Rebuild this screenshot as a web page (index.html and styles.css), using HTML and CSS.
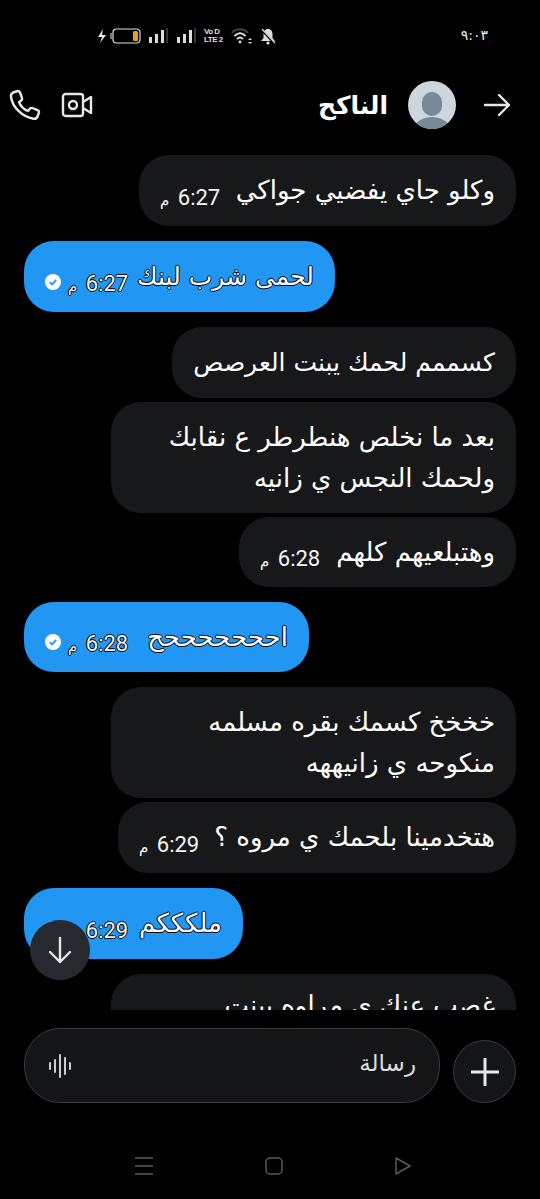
FILE: index.html
```html
<!DOCTYPE html>
<html lang="ar">

	<head>
		<meta charset="UTF-8">
		<title>الناكح</title>
		<link rel="stylesheet" href="styles.css">
	</head>

	<body>
		<div class="phone">
			<!-- status bar -->
			<div class="status">
				<div class="status_icons">
					<svg class="bolt" width="12" height="16" viewBox="0 0 12 16"><path d="M7 1 L2 9 H6 L4 15 L10 7 H6 Z" fill="#e8e8e8"/></svg>
					<svg width="31" height="16" viewBox="0 0 31 16"><rect x="0" y="5" width="2" height="6" fill="#777"/><rect x="3" y="1" width="27" height="14" rx="3.5" fill="none" stroke="#ddd" stroke-width="1.2"/><rect x="23" y="3" width="5" height="10" rx="1.5" fill="#e3a11c"/></svg>
					<svg width="21" height="16" viewBox="0 0 21 16"><rect x="1" y="9" width="3" height="6" fill="#ddd"/><rect x="7" y="6" width="3" height="9" fill="#ddd"/><rect x="13" y="2" width="3" height="13" fill="#ddd"/><rect x="18" y="0" width="2" height="15" fill="#333"/></svg>
					<svg width="21" height="16" viewBox="0 0 21 16"><rect x="1" y="9" width="3" height="6" fill="#ddd"/><rect x="7" y="6" width="3" height="9" fill="#ddd"/><rect x="13" y="2" width="3" height="13" fill="#ddd"/><rect x="18" y="0" width="2" height="15" fill="#333"/></svg>
					<div class="volte"><span>Vo D</span><span>LTE 2</span></div>
					<svg width="22" height="18" viewBox="0 0 22 18" fill="none" stroke="#ddd" stroke-width="1.8"><path d="M1 6 C5 1 13 1 17 6" stroke="#444"/><path d="M3.5 9 C7 5.5 11 5.5 14.5 9"/><path d="M6 12 C8 10 10 10 12 12"/><circle cx="9" cy="15" r="1.4" fill="#ddd" stroke="none"/><path d="M19 11 l-2 2 h4 z M19 17 l-2 -2 h4 z" fill="#ddd" stroke="none"/></svg>
					<svg width="16" height="17" viewBox="0 0 16 17"><path d="M8 1 C5 1 3.5 3.500 3.500 6 V10 L1 13 H15 L12.500 10 V6 C12.500 3.500 11 1 8 1 Z" fill="#ddd"/><circle cx="8" cy="15" r="1.600" fill="#ddd"/><path d="M1 1 L15 16" stroke="#000" stroke-width="2.500"/><path d="M2 1 L15 15" stroke="#ddd" stroke-width="1.200"/></svg>
				</div>
				<div class="status_time">٩:٠٣</div>
			</div>

			<!-- header -->
			<div class="head">
				<div class="head_actions">
					<svg width="32" height="32" viewBox="0 0 32 32" fill="none" stroke="#e8e8e8" stroke-width="2.400" stroke-linejoin="round"><path d="M4 3.500 L9 2 C10 2 10.500 2.500 11 3.500 L13 9 C13.300 10 13 10.800 12.300 11.400 L10 13.300 C11.500 17 15 20.500 19 22 L21 19.600 C21.700 18.900 22.500 18.700 23.500 19 L29 21.300 C30 21.800 30.300 22.500 30 23.500 L28.500 27.500 C28 29 26.500 30 24.500 29.700 C13 28 3.500 18 2 8 C1.800 6 2.500 4.300 4 3.500 Z"/></svg>
					<svg width="32" height="26" viewBox="0 0 32 26" fill="none" stroke="#e8e8e8" stroke-width="2.400" stroke-linejoin="round"><rect x="2" y="2" width="20" height="22" rx="2.500"/><circle cx="12" cy="13" r="4"/><path d="M22 10 L30 5 V21 L22 16"/></svg>
				</div>
				<div class="head_user">
					<div class="head_name">الناكح</div>
					<svg class="avatar" width="48" height="48" viewBox="0 0 48 48"><defs><clipPath id="av"><circle cx="24" cy="24" r="24"/></clipPath></defs><circle cx="24" cy="24" r="24" fill="#ccd6dd"/><g clip-path="url(#av)" fill="#778899"><rect x="14" y="11" width="20" height="24" rx="10"/><ellipse cx="24" cy="49" rx="18" ry="13"/></g></svg>
					<svg width="28" height="24" viewBox="0 0 28 24" fill="none" stroke="#e8e8e8" stroke-width="2.400" stroke-linecap="round" stroke-linejoin="round"><path d="M2 12 H26 M16 2 L26 12 L16 22"/></svg>
				</div>
			</div>

			<!-- messages -->
			<div class="chat">
				<div class="msg msg_in w_377"><span class="msg_text">وكلو جاي يفضيي جواكي</span><span class="msg_time">6:27 <small>م</small></span></div>
				<div class="msg msg_out w_311"><span class="msg_text msg_small">لحمى شرب لبنك</span><span class="msg_time">6:27 <small>م</small></span><svg class="tick" width="16" height="16" viewBox="0 0 16 16"><circle cx="8" cy="8" r="8" fill="#fff"/><path d="M4.800 8.200 L7 10.400 L11.200 5.800" fill="none" stroke="#2196f3" stroke-width="1.800"/></svg></div>
				<div class="msg msg_in msg_tight w_344"><span class="msg_text msg_small">كسممم لحمك يبنت العرصص</span></div>
				<div class="msg msg_in msg_tight w_405"><span class="msg_text">بعد ما نخلص هنطرطر ع نقابك<br>ولحمك النجس ي زانيه</span></div>
				<div class="msg msg_in msg_70 w_277"><span class="msg_text">وهتبلعيهم كلهم</span><span class="msg_time">6:28 <small>م</small></span></div>
				<div class="msg msg_out msg_70 w_285"><span class="msg_text">احححححححح</span><span class="msg_time">6:28 <small>م</small></span><svg class="tick" width="16" height="16" viewBox="0 0 16 16"><circle cx="8" cy="8" r="8" fill="#fff"/><path d="M4.800 8.200 L7 10.400 L11.200 5.800" fill="none" stroke="#2196f3" stroke-width="1.800"/></svg></div>
				<div class="msg msg_in msg_tight w_405"><span class="msg_text">خخخخ كسمك بقره مسلمه<br>منكوحه ي زانيههه</span></div>
				<div class="msg msg_in w_398"><span class="msg_text">هتخدمينا بلحمك ي مروه ؟</span><span class="msg_time">6:29 <small>م</small></span></div>
				<div class="msg msg_out w_219"><span class="msg_text">ملكككم</span><span class="msg_time">6:29 <small>م</small></span><svg class="tick" width="16" height="16" viewBox="0 0 16 16"><circle cx="8" cy="8" r="8" fill="#fff"/><path d="M4.800 8.200 L7 10.400 L11.200 5.800" fill="none" stroke="#2196f3" stroke-width="1.800"/></svg></div>
				<div class="msg msg_in w_405 msg_last"><span class="msg_text">غصب عنك ي مراوه يبنت</span></div>
			</div>

			<div class="scroll_btn">
				<svg width="24" height="28" viewBox="0 0 24 28" fill="none" stroke="#e6e6e6" stroke-width="2.400" stroke-linecap="round" stroke-linejoin="round"><path d="M12 2 V26 M2 16 L12 26 L22 16"/></svg>
			</div>

			<!-- composer -->
			<div class="composer">
				<div class="plus">
					<svg width="30" height="30" viewBox="0 0 30 30" stroke="#e8e8e8" stroke-width="3"><path d="M15 1 V29 M1 15 H29"/></svg>
				</div>
				<div class="input">
					<svg width="24" height="24" viewBox="0 0 24 24" stroke="#ccc" stroke-width="2" stroke-linecap="round"><path d="M2 9 V15 M7 6 V18 M12 1 V23 M17 4 V20 M22 9 V15"/></svg>
					<span class="input_text">رسالة</span>
				</div>
			</div>

			<!-- nav -->
			<div class="nav">
				<svg width="20" height="20" viewBox="0 0 20 20" stroke="#5a5a5a" stroke-width="1.500"><path d="M1 2 H19 M1 10 H19 M1 18 H19"/></svg>
				<svg width="18" height="18" viewBox="0 0 18 18" fill="none" stroke="#5a5a5a" stroke-width="1.500"><rect x="1" y="1" width="16" height="16" rx="4"/></svg>
				<svg width="18" height="20" viewBox="0 0 18 20" fill="none" stroke="#5a5a5a" stroke-width="1.500" stroke-linejoin="round"><path d="M2 2 L16 10 L2 18 Z"/></svg>
			</div>
		</div>
	</body>

</html>
```

FILE: styles.css
```css
html, body {
	margin: 0;
	background-color: #000;
}

.phone {
	position: relative;
	width: 540px;
	height: 1199px;
	overflow: hidden;
	background-color: #000;
	color: #fff;
	font-family: "DejaVu Sans", "Noto Sans", sans-serif;
}

.status {
	height: 70px;
	box-sizing: border-box;
	padding: 27px 52px 0 96px;
	display: flex;
	justify-content: space-between;
	align-items: flex-start;
}

.status_icons {
	display: flex;
	align-items: center;
	gap: 7px;
	height: 18px;
}

.bolt {
	margin-right: -5px;
}

.volte {
	display: flex;
	flex-direction: column;
	width: 20px;
	font-family: "Liberation Sans", sans-serif;
	font-size: 8px;
	line-height: 8px;
	letter-spacing: -0.5px;
	white-space: nowrap;
	font-weight: bold;
	color: #ddd;
}

.status_time {
	font-size: 14px;
	line-height: 16px;
	color: #eee;
}

.head {
	height: 70px;
	padding: 0 29px 0 9px;
	display: flex;
	justify-content: space-between;
	align-items: center;
}

.head_actions {
	display: flex;
	align-items: center;
	gap: 20px;
}

.head_user {
	display: flex;
	align-items: center;
}

.head_name {
	font-size: 25px;
	font-weight: bold;
	margin-right: 20px;
}

.avatar {
	margin-right: 27px;
}

.chat {
	height: 870px;
	box-sizing: border-box;
	padding: 15px 24px 0;
	overflow: hidden;
	display: flex;
	flex-direction: column;
}

.msg {
	direction: rtl;
	flex: none;
	display: flex;
	align-items: center;
	box-sizing: border-box;
	min-height: 71px;
	padding: 14.5px 21px;
	border-radius: 30px;
	margin-bottom: 15px;
	font-size: 26px;
	line-height: 41px;
}

.msg_small {
	font-size: 25px;
}

.msg_in {
	align-self: flex-end;
	background-color: #17181a;
}

.msg_tight {
	margin-bottom: 4px;
}

.msg_70 {
	min-height: 0;
	height: 70px;
	padding-top: 0;
	padding-bottom: 0;
}

/* bubble widths, the font is not the one on the phone */
.w_219 { width: 219px; }
.w_277 { width: 277px; }
.w_285 { width: 285px; }
.w_311 { width: 311px; }
.w_344 { width: 344px; }
.w_377 { width: 377px; }
.w_398 { width: 398px; }
.w_405 { width: 405px; }

.msg_last {
	height: 100px;
	align-items: flex-start;
	padding-top: 11px;
}

.msg_out {
	align-self: flex-start;
	background-color: #2196f3;
	text-shadow: 1px 0 0 #000, -1px 0 0 #000, 0 1px 0 #000, 0 -1px 0 #000;
}

.msg_time {
	margin-right: auto;
	margin-top: 16px;
	font-family: "Roboto", sans-serif;
	font-size: 22px;
	line-height: 24px;
	white-space: nowrap;
	color: #f5f5f5;
}

.msg_time small {
	font-family: "DejaVu Sans", sans-serif;
	font-size: 15px;
	margin-right: 3px;
}

.tick {
	margin-right: 7px;
	margin-top: 10px;
}

.scroll_btn {
	position: absolute;
	left: 30px;
	top: 920px;
	width: 60px;
	height: 60px;
	border-radius: 50%;
	background-color: #26292d;
	display: flex;
	align-items: center;
	justify-content: center;
}

.composer {
	margin-top: 18px;
	height: 75px;
	padding: 0 24px;
	display: flex;
	flex-direction: row-reverse;
	align-items: flex-end;
	gap: 13px;
}

.plus {
	width: 63px;
	height: 63px;
	box-sizing: border-box;
	border: 1px solid #3a3c3f;
	border-radius: 50%;
	background-color: #141517;
	display: flex;
	align-items: center;
	justify-content: center;
}

.input {
	flex: 1;
	height: 75px;
	box-sizing: border-box;
	border: 1px solid #3a3c3f;
	border-radius: 36px;
	background-color: #141517;
	padding: 0 23px;
	display: flex;
	align-items: center;
	justify-content: space-between;
}

.input_text {
	direction: rtl;
	font-size: 23px;
	color: #ddd;
	margin-bottom: 6px;
}

.nav {
	margin-top: 53px;
	padding: 0 128px 0 134px;
	display: flex;
	justify-content: space-between;
	align-items: center;
}
```
